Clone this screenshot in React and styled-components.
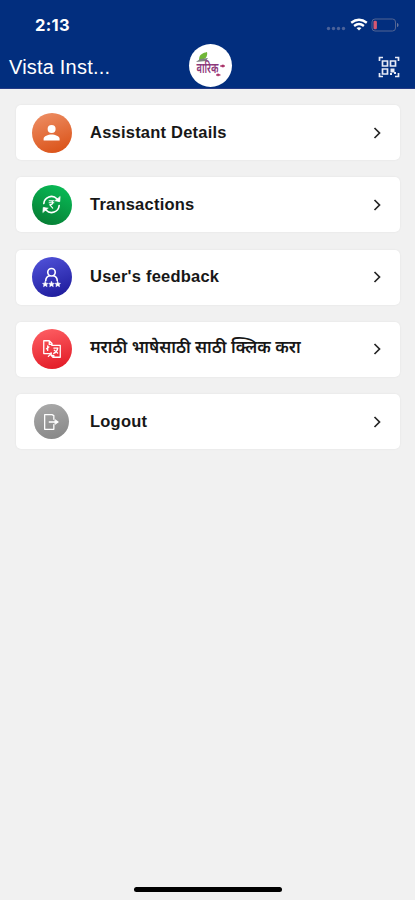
import React from "react";
import styled, { createGlobalStyle } from "styled-components";

const GlobalStyle = createGlobalStyle`
  * { box-sizing: border-box; }
  body { margin: 0; background: #f1f1f1; }
`;

const Screen = styled.div`
  width: 415px;
  height: 900px;
  display: flex;
  flex-direction: column;
  overflow: hidden;
  background: #f1f1f1;
  font-family: "Liberation Sans", "Noto Sans", sans-serif;
`;

const Header = styled.header`
  height: 89px;
  flex: none;
  background: #022e7e;
  border-bottom: 1px solid #263b86;
  color: #fff;
`;

const StatusBar = styled.div`
  height: 43px;
  padding: 7px 16px 0 35px;
  display: flex;
  align-items: center;
  justify-content: space-between;
`;

const Clock = styled.span`
  font: 700 16.5px/20px Inter, sans-serif;
  letter-spacing: 0.3px;
`;

const StatusIcons = styled.div`
  display: flex;
  align-items: center;
`;

const TitleBar = styled.div`
  height: 45px;
  padding: 0 15px 0 9px;
  display: grid;
  grid-template-columns: 180px 43px 1fr;
  align-items: center;
`;

const Title = styled.h1`
  margin: 2px 0 0;
  font-size: 20px;
  line-height: 26px;
  font-weight: 400;
  letter-spacing: 0.2px;
`;

const Logo = styled.div`
  width: 43px;
  height: 43px;
  border-radius: 50%;
  background: #fff;
`;

const ScanButton = styled.button`
  justify-self: end;
  width: 22px;
  height: 22px;
  margin-top: 2px;
  padding: 0;
  border: 0;
  background: none;
  color: #e8ebf7;
  display: flex;
`;

const Menu = styled.main`
  flex: 1;
  padding: 16px 15px 0 16px;
  display: flex;
  flex-direction: column;
  gap: 17.3px;
`;

const Row = styled.div`
  height: 55px;
  flex: none;
  display: flex;
  align-items: center;
  padding: 0 16px 0 15px;
  border-radius: 5px;
  background: #fff;
  box-shadow: 0 0 2px rgba(0, 0, 0, 0.08);
`;

const IconSlot = styled.div`
  width: 41px;
  display: flex;
  justify-content: center;
`;

const Disc = styled.div`
  width: ${(p) => p.$size}px;
  height: ${(p) => p.$size}px;
  border-radius: 50%;
  background: ${(p) => p.$fill};
  display: flex;
  align-items: center;
  justify-content: center;
`;

const Label = styled.span`
  flex: 1;
  margin: -2px 0 0 18px;
  color: #171717;
  font-size: 16.5px;
  line-height: 24px;
  font-weight: 700;
  letter-spacing: 0.22px;
  white-space: nowrap;
`;

const MarathiLabel = styled(Label)`
  margin-top: 0;
  font-family: "Noto Sans Devanagari", "Noto Sans", sans-serif;
  font-size: 16.8px;
  font-weight: 600;
  letter-spacing: 0;
`;

const HomeArea = styled.footer`
  height: 18px;
  display: flex;
  justify-content: center;
  padding-top: 5px;
`;

const HomeBar = styled.div`
  width: 148px;
  height: 5px;
  border-radius: 3px;
  background: #000;
`;

const Glyph = ({ size = 24, width = 1.5, children }) => (
  <svg width={size} height={size} viewBox="0 0 24 24" fill="none" stroke="#fff"
    strokeWidth={width} strokeLinecap="round" strokeLinejoin="round">{children}</svg>
);

const PersonIcon = () => (
  <Glyph>
    <g fill="#fff" stroke="none">
      <circle cx="11.6" cy="8" r="4" />
      <path d="M3.6 19.4v-1.7c0-2.4 4.5-4.2 8-4.2s8 1.8 8 4.2v1.7Z" />
    </g>
  </Glyph>
);

const RupeeCycleIcon = () => (
  <Glyph size={23} width={1.7}>
    <path d="M4 11a8 8 0 0 1 13.6-5l2 2M20 13a8 8 0 0 1-13.6 5l-2-2" />
    <path d="m21 4-.4 5-4.8-.8ZM3 20l.4-5 4.8.8Z" fill="#fff" strokeWidth=".7" />
    <path d="M9.5 8h5M9.5 10.2h5M10 8c4.5 0 4.5 4.2 0 4.2l3.3 3.6" strokeWidth="1.1" />
  </Glyph>
);

const FeedbackIcon = () => (
  <Glyph size={23} width={1.7}>
    <circle cx="12" cy="6.5" r="3.9" />
    <path d="M6 15.3c0-2.8 1.5-4.6 4-5.2M18 15.3c0-2.8-1.5-4.6-4-5.2" />
    {[5.5, 12, 18.5].map((x) => (
      <path key={x} transform={`translate(${x} 18.8)`} fill="#fff" stroke="#fff" strokeWidth=".5"
        d="m0-2.7.9 1.8 2 .2-1.4 1.5.4 2L0 1.7l-1.9 1.1.4-2-1.4-1.5 2-.2Z" />
    ))}
  </Glyph>
);

const TranslateIcon = () => (
  <Glyph size={22} width={1.4}>
    <path d="M10 17H3V3h6l3 3v2M9 3v4h3" />
    <path d="M12 8h9v13h-8l-2-2v-3M11 19h3v2M7.3 8.5v5M6 11.8l2.6-2" />
    <path d="M14 11h4.5M18 12c-.6 2.7-2.4 4.2-4.2 4.7M14.5 13.4l3.6 3M8 20l3-3" />
  </Glyph>
);

const LogoutIcon = () => (
  <Glyph size={22} width={1.4}>
    <path d="M14 9V5l-2-1H4v16h10v-5M9 12h9" />
    <path d="m15.5 9.5 3.5 2.5-3.5 2.5Z" fill="#fff" strokeWidth=".8" />
  </Glyph>
);

const BrandMark = () => (
  <svg width="43" height="43" viewBox="0 0 43 43">
    <path d="M10 16C10 10 14 9 18 8c1 5-2 8-8 8Z" fill="#70b737" />
    <path d="m7 18 4-3 8-1-2 3Z" fill="#7d8182" />
    <text x="7.5" y="29" fontFamily="Noto Sans Devanagari, Noto Sans, sans-serif"
      fontSize="15" fontWeight="600" fill="#8b3679" textLength="22" lengthAdjust="spacingAndGlyphs">वारिक</text>
    <path d="m31 22 3-1.2 2 1.2-2 1.2ZM27 31l2-1.3 2.5 1.3-2.5 1Z" fill="#a72a62" stroke="#a72a62" strokeWidth=".5" />
  </svg>
);

const ScanIcon = () => (
  <svg width="22" height="22" viewBox="0 0 22 22" fill="none" stroke="currentColor" strokeWidth="1.7">
    <path d="M1.5 5V1.5H5M17 1.5h3.5V5M20.5 17v3.5H17M5 20.5H1.5V17" />
    <path d="M4.5 5h5v5h-5ZM12.5 5h5v5h-5ZM4.5 13h5v5h-5Z" />
    <path d="M12.5 12.5h4v4h-4ZM16 16h2v2h-2ZM12 17h2v2h-2Z" fill="currentColor" stroke="none" />
  </svg>
);

const Chevron = () => (
  <svg width="12" height="14" viewBox="0 0 12 14" fill="none" stroke="#252525" strokeWidth="1.7">
    <path d="m2.5 2 5 5-5 5" />
  </svg>
);

const Status = () => (
  <StatusIcons>
    <svg width="73" height="18" viewBox="0 0 73 18">
      <g fill="#4b6299">
        {[2, 7, 12, 17].map((x) => <circle key={x} cx={x + 0.5} cy="12.5" r="1.7" />)}
      </g>
      <g fill="none" stroke="#fff" strokeWidth="2.4">
        <path d="M25.2 6.8q7.8-6 15.6 0M28.1 10q4.9-3.8 9.8 0" />
      </g>
      <path d="M30.5 12q2.5-1.7 5 0L33 14.5Z" fill="#fff" />
      <rect x="46" y="3" width="23.5" height="12" rx="3" fill="none" stroke="#526493" />
      <path d="M71 7c2 0 2 4 0 4Z" fill="#66749c" />
      <rect x="47.5" y="4.7" width="3.4" height="8.6" rx="1.3" fill="#d65771" />
    </svg>
  </StatusIcons>
);

const items = [
  { label: "Assistant Details", Icon: PersonIcon, fill: "linear-gradient(160deg, #ee9168, #d94d11)" },
  { label: "Transactions", Icon: RupeeCycleIcon, fill: "linear-gradient(205deg, #08b653 15%, #067630)" },
  { label: "User's feedback", Icon: FeedbackIcon, fill: "linear-gradient(160deg, #5355dc, #1a1797)" },
  { label: "मराठी भाषेसाठी साठी क्लिक करा", Icon: TranslateIcon, fill: "linear-gradient(165deg, #ff6266, #e01622)", marathi: true },
  { label: "Logout", Icon: LogoutIcon, fill: "linear-gradient(165deg, #ababab, #858585)", size: 35 },
];

export default function App() {
  return (
    <Screen>
      <GlobalStyle />
      <Header>
        <StatusBar><Clock>2:13</Clock><Status /></StatusBar>
        <TitleBar>
          <Title>Vista Inst...</Title>
          <Logo><BrandMark /></Logo>
          <ScanButton aria-label="Scan code"><ScanIcon /></ScanButton>
        </TitleBar>
      </Header>
      <Menu>
        {items.map(({ label, Icon, fill, marathi, size = 40 }) => {
          const Text = marathi ? MarathiLabel : Label;
          return (
            <Row key={label}>
              <IconSlot><Disc $size={size} $fill={fill}><Icon /></Disc></IconSlot>
              <Text>{label}</Text>
              <Chevron />
            </Row>
          );
        })}
      </Menu>
      <HomeArea><HomeBar /></HomeArea>
    </Screen>
  );
}
